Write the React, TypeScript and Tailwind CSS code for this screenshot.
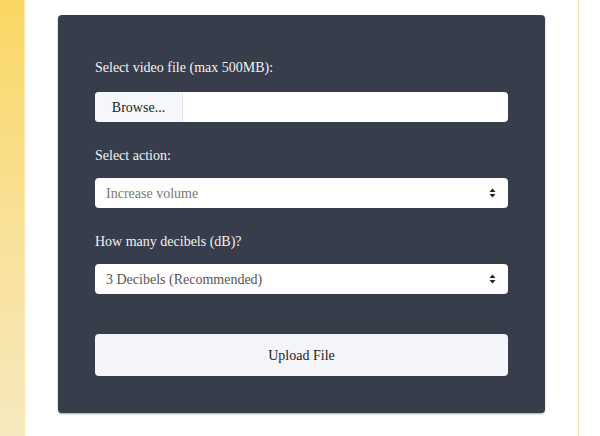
import React from "react";

function Arrows() {
  return (
    <svg width="7" height="10" viewBox="0 0 7 10" className="shrink-0">
      <path d="M3.5 0.5 L6.5 4 H0.5 Z" fill="#222" />
      <path d="M3.5 9.5 L6.5 6 H0.5 Z" fill="#222" />
    </svg>
  );
}

export default function App() {
  return (
    <div className="relative flex h-[436px] w-[600px] bg-white overflow-hidden font-['Liberation_Serif','DejaVu_Serif',serif]">
      <div className="h-full w-[25px] shrink-0 bg-gradient-to-b from-[#fbd762] to-[#f7e9bf] border-r border-[#fbe9b0]" />
      <div className="flex-1 pl-[33px] pt-[15px]">
        <div className="w-[487px] h-[398px] rounded-[4px] bg-[#383d4b] shadow-[0_1px_2px_rgba(0,0,0,0.35)] px-[37px] pt-[45px]">
          <div className="text-[14px] text-[#f2f2f2] leading-[16px] h-[16px]">Select video file (max 500MB):</div>
          <div className="mt-[16px] flex h-[30px] rounded-[4px] bg-white overflow-hidden">
            <div className="w-[88px] bg-[#f5f7fa] border-r border-[#e3e6ea] flex items-center justify-center text-[14px] text-[#222]">Browse...</div>
            <div className="flex-1" />
          </div>
          <div className="mt-[26px] text-[14px] text-[#f2f2f2] leading-[16px] h-[16px]">Select action:</div>
          <div className="mt-[14px] flex h-[30px] items-center justify-between rounded-[4px] bg-white pl-[11px] pr-[12px]">
            <span className="text-[14px] text-[#777]">Increase volume</span>
            <Arrows />
          </div>
          <div className="mt-[26px] text-[14px] text-[#f2f2f2] leading-[16px] h-[16px]">How many decibels (dB)?</div>
          <div className="mt-[14px] flex h-[30px] items-center justify-between rounded-[4px] bg-white pl-[11px] pr-[12px]">
            <span className="text-[14px] text-[#555]">3 Decibels (Recommended)</span>
            <Arrows />
          </div>
          <div className="mt-[40px] flex h-[42px] items-center justify-center rounded-[4px] bg-[#f3f5f9] text-[14px] text-[#222]">Upload File</div>
        </div>
      </div>
      <div className="absolute left-[578px] top-0 h-full w-px bg-[#f5e3a8]" />
    </div>
  );
}
